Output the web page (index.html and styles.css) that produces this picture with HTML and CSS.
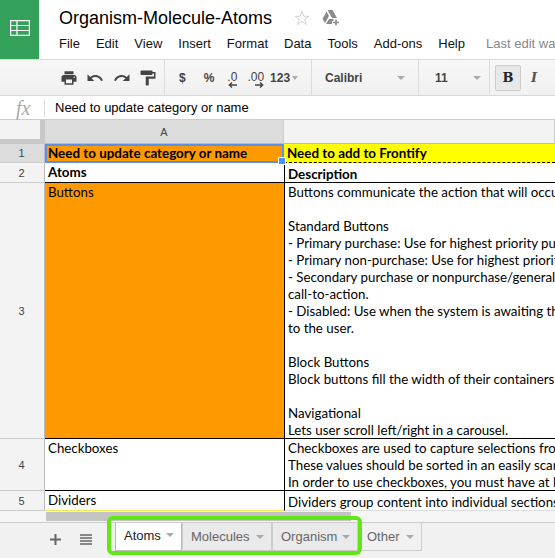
FILE: index.html
```html
<!DOCTYPE html>
<html lang="en">
<head>
    <meta charset="UTF-8">
    <meta name="viewport" content="width=device-width, initial-scale=1.0">
    <title>Organism-Molecule-Atoms</title>
    <link rel="stylesheet" href="styles.css">
</head>
<body>
    <header class="top">
        <div class="logo">
            <svg width="20" height="16" viewBox="0 0 20 16"><path d="M.6.6h18.800v14.800H.6zM.6 5.500h18.800M.6 10.500h18.800M7 .6v14.800" fill="none" stroke="#fff" stroke-width="1.200"/></svg>
        </div>
        <div class="doc">
            <div class="title-row">
                <span class="title">Organism-Molecule-Atoms</span>
                <svg class="star" width="16" height="16" viewBox="0 0 18 18"><path d="M9 1.500l2 5.600h5.800l-4.700 3.500 1.800 5.700L9 12.800l-4.900 3.500 1.800-5.700-4.700-3.500H7z" fill="none" stroke="#ccc" stroke-width="1"/></svg>
                <svg class="drive" width="18" height="16" viewBox="0 0 18 16"><path d="M5.500 0h5l4.500 8h-5zM4.600 1.500L7 6 3 13 .5 9zM4 14l3-5h4.500v2H10v3z" fill="#8a8a8a"/><path d="M14 9.500v6M11 12.500h6" stroke="#8a8a8a" stroke-width="1.600" fill="none"/></svg>
            </div>
            <nav class="menu">
                <span>File</span><span>Edit</span><span>View</span><span>Insert</span><span>Format</span><span>Data</span><span>Tools</span><span>Add-ons</span><span>Help</span>
                <span class="last-edit">Last edit was yesterday</span>
            </nav>
        </div>
    </header>

    <div class="toolbar">
        <div class="tool-group icons">
            <svg width="18" height="18" viewBox="0 0 24 24"><path d="M19 8H5c-1.660 0-3 1.340-3 3v6h4v4h12v-4h4v-6c0-1.660-1.340-3-3-3zm-3 11H8v-5h8v5zm3-7c-.55 0-1-.45-1-1s.45-1 1-1 1 .45 1 1-.45 1-1 1zm-1-9H6v4h12V3z"/></svg>
            <svg width="18" height="18" viewBox="0 0 24 24"><path d="M12.500 8c-2.650 0-5.050.99-6.900 2.600L2 7v9h9l-3.620-3.620c1.390-1.160 3.160-1.880 5.120-1.880 3.540 0 6.550 2.310 7.600 5.500l2.370-.78C21.080 11.030 17.150 8 12.500 8z"/></svg>
            <svg width="18" height="18" viewBox="0 0 24 24"><path d="M18.400 10.600C16.550 8.990 14.150 8 11.500 8c-4.650 0-8.580 3.030-9.960 7.220L3.900 16c1.050-3.190 4.050-5.500 7.600-5.500 1.950 0 3.730.72 5.120 1.880L13 16h9V7l-3.600 3.600z"/></svg>
            <svg width="18" height="18" viewBox="0 0 24 24"><path d="M18 4V3c0-.55-.45-1-1-1H3c-.55 0-1 .45-1 1v4c0 .55.45 1 1 1h14c.55 0 1-.45 1-1V6h2v4H9v11c0 .55.45 1 1 1h2c.55 0 1-.45 1-1v-8h9V4h-4z"/></svg>
        </div>
        <div class="tool-group formats">
            <span class="fmt dollar">$</span>
            <span class="fmt pct">%</span>
            <span class="fmt dec">.0<svg width="9" height="6" viewBox="0 0 9 6"><path d="M9 3H2M4 .5L1.300 3 4 5.500" fill="none" stroke="#444" stroke-width="1.400"/></svg></span>
            <span class="fmt dec">.00<svg width="9" height="6" viewBox="0 0 9 6"><path d="M0 3h7M5 .5L7.700 3 5 5.500" fill="none" stroke="#444" stroke-width="1.400"/></svg></span>
            <span class="fmt num">123<i class="caret"></i></span>
        </div>
        <div class="tool-group font-name"><span>Calibri</span><i class="caret"></i></div>
        <div class="tool-group font-size"><span>11</span><i class="caret"></i></div>
        <div class="tool-group styles">
            <span class="style-btn on">B</span>
            <span class="style-btn italic">I</span>
        </div>
    </div>

    <div class="formula">
        <span class="fx">fx</span>
        <span class="formula-text">Need to update category or name</span>
    </div>

    <div class="sheet">
        <div class="corner"></div>
        <div class="col-head selected">A</div>
        <div class="col-head"></div>

        <div class="row-head selected">1</div>
        <div class="cell bold orange active">Need to update category or name<i class="handle"></i></div>
        <div class="cell bold yellow">Need to add to Frontify</div>

        <div class="row-head">2</div>
        <div class="cell bold">Atoms</div>
        <div class="cell bold col-b low">Description</div>

        <div class="row-head">3</div>
        <div class="cell orange">Buttons</div>
        <div class="cell col-b">Buttons communicate the action that will occur when clicked
<br>
<br>Standard Buttons
<br>- Primary purchase: Use for highest priority purchase actions
<br>- Primary non-purchase: Use for highest priority actions
<br>- Secondary purchase or nonpurchase/general actions with a lesser
<br>call-to-action.
<br>- Disabled: Use when the system is awaiting the next action
<br>to the user.
<br>
<br>Block Buttons
<br>Block buttons fill the width of their containers and are
<br>
<br>Navigational
<br>Lets user scroll left/right in a carousel.</div>

        <div class="row-head">4</div>
        <div class="cell">Checkboxes</div>
        <div class="cell col-b">Checkboxes are used to capture selections from a list
<br>These values should be sorted in an easily scannable order
<br>In order to use checkboxes, you must have at least two</div>

        <div class="row-head">5</div>
        <div class="cell last">Dividers</div>
        <div class="cell col-b low last-b">Dividers group content into individual sections of a page</div>
    </div>

    <div class="hscroll"><div class="thumb"></div></div>

    <footer class="tabbar">
        <div class="tab-tools">
            <svg width="11" height="11" viewBox="0 0 11 11"><path d="M5.500 0v11M0 5.500h11" stroke="#666" stroke-width="2"/></svg>
            <svg width="12" height="11" viewBox="0 0 12 11"><path d="M0 1h12M0 4h12M0 7h12M0 10h12" stroke="#666" stroke-width="1.600"/></svg>
        </div>
        <div class="tab active">Atoms<i class="caret"></i></div>
        <div class="tab">Molecules<i class="caret"></i></div>
        <div class="tab organism">Organism<i class="caret"></i></div>
        <div class="tab other">Other<i class="caret"></i></div>
        <div class="highlight"></div>
    </footer>
</body>
</html>
```

FILE: styles.css
```css
html, body {
    margin: 0;
    padding: 0;
}
body {
    width: 555px;
    height: 558px;
    overflow: hidden;
    display: flex;
    flex-direction: column;
    font-family: 'Liberation Sans', Arial, sans-serif;
    color: #000;
    background: #fff;
}
.top {
    display: flex;
    height: 59px;
    flex: none;
}
.logo {
    width: 39px;
    box-sizing: border-box;
    padding-bottom: 4px;
    background-color: #34a15a;
    display: flex;
    align-items: center;
    justify-content: center;
}
.doc {
    padding-left: 20px;
    min-width: 0;
    flex: 1;
    overflow: hidden;
}
.title-row {
    display: flex;
    align-items: center;
    height: 36px;
    white-space: nowrap;
}
.title {
    font-size: 18px;
}
.star {
    margin-left: 22px;
}
.drive {
    margin-left: 12px;
}
.menu {
    display: flex;
    gap: 16px;
    font-size: 13px;
    white-space: nowrap;
    color: #111;
}
.last-edit {
    color: #888;
    margin-left: 5px;
}

.toolbar {
    display: flex;
    flex: none;
    height: 35px;
    background: linear-gradient(#f7f7f7, #f1f1f1);
    border-top: 1px solid #d9d9d9;
    border-bottom: 1px solid #d9d9d9;
    overflow: hidden;
}
.tool-group {
    display: flex;
    align-items: center;
    border-right: 1px solid #dcdcdc;
    flex: none;
    font-size: 12px;
    font-weight: bold;
    color: #444;
}
.icons {
    width: 165px;
    padding-left: 60px;
    box-sizing: border-box;
    gap: 8.400px;
}
.icons svg {
    fill: #444;
}
.formats {
    width: 147px;
    box-sizing: border-box;
}
.fmt {
    display: flex;
    flex-direction: column;
    align-items: flex-end;
    line-height: 10px;
}
.dollar {
    margin-left: 14px;
}
.pct {
    margin-left: 18px;
}
.dec {
    margin-left: 13px;
    margin-top: 5px;
    font-weight: normal;
}
.dec + .dec {
    margin-left: 10px;
}
.num {
    flex-direction: row;
    align-items: center;
    margin-left: 6px;
}
.font-name {
    width: 107px;
    box-sizing: border-box;
    padding-left: 13px;
    justify-content: space-between;
    padding-right: 13px;
}
.font-size {
    width: 71px;
    box-sizing: border-box;
    padding-left: 16px;
    padding-right: 8px;
    justify-content: space-between;
}
.styles {
    border-right: none;
    padding-left: 5px;
}
.style-btn {
    width: 26px;
    height: 26px;
    display: flex;
    align-items: center;
    justify-content: center;
    box-sizing: border-box;
    font-family: 'DejaVu Serif', serif;
    font-size: 13px;
    font-weight: bold;
    color: #222;
}
.style-btn.on {
    background: #e8e8e8;
    border: 1px solid #ccc;
    border-radius: 2px;
}
.style-btn.italic {
    font-style: italic;
    color: #555;
}
.caret {
    display: inline-block;
    width: 0;
    height: 0;
    border-left: 4px solid transparent;
    border-right: 4px solid transparent;
    border-top: 4px solid #aaa;
}
.num .caret {
    margin-left: 2px;
    border-left-width: 3.500px;
    border-right-width: 3.500px;
}

.formula {
    display: flex;
    align-items: center;
    flex: none;
    height: 23px;
    border-bottom: 1px solid #ccc;
    font-size: 13px;
}
.fx {
    width: 45px;
    box-sizing: border-box;
    padding-left: 16px;
    font-family: 'Liberation Serif', serif;
    font-style: italic;
    font-size: 20px;
    color: #aaa;
    border-right: 1px solid #ddd;
    line-height: 18px;
}
.formula-text {
    margin-left: 10px;
    padding-bottom: 1px;
}

.sheet {
    display: grid;
    grid-template-columns: 45px 239px 271px;
    grid-template-rows: 24px 19px 20px 256px 52px 20px;
    flex: none;
    font-family: Lato, sans-serif;
    font-size: 13.300px;
    overflow: hidden;
}
.corner {
    background: #f3f3f3;
    border-right: 5px solid #c8c8c8;
    border-bottom: 5px solid #c8c8c8;
    box-sizing: border-box;
}
.col-head {
    background: #f3f3f3;
    border-right: 1px solid #ccc;
    border-bottom: 1px solid #bbb;
    display: flex;
    align-items: center;
    justify-content: center;
    font-family: 'Liberation Sans', sans-serif;
    font-size: 11px;
    color: #444;
}
.col-head.selected {
    background: #dcdcdc;
}
.row-head {
    background: #f3f3f3;
    border-right: 1px solid #bbb;
    border-bottom: 1px solid #ccc;
    display: flex;
    align-items: center;
    justify-content: center;
    padding-right: 1px;
    font-family: 'Liberation Sans', sans-serif;
    font-size: 11px;
    color: #444;
}
.row-head.selected {
    background: #dcdcdc;
}
.cell {
    padding: 1px 0 0 3px;
    line-height: 17px;
    white-space: nowrap;
    overflow: hidden;
    border-bottom: 1px solid #000;
    box-sizing: border-box;
}
.bold {
    font-weight: bold;
    font-size: 13.400px;
}
.orange {
    background-color: #ff9900;
}
.yellow {
    background-color: #ffff00;
    border-bottom: 1px dashed #000;
}
.col-b {
    border-left: 1px solid #000;
}
.low {
    padding-top: 3px;
}
.last {
    border-bottom: 1px solid #f2e84b;
}
.last-b {
    border-bottom: 1px solid #ddd;
}
.active {
    border: 2px solid #5b8fe8;
    padding: 0 0 0 1px;
    line-height: 15px;
    overflow: visible;
    position: relative;
}
.handle {
    position: absolute;
    right: -4px;
    bottom: -4px;
    width: 6px;
    height: 6px;
    background: #4d90fe;
    border: 1px solid #fff;
}

.hscroll {
    flex: none;
    height: 11px;
    box-sizing: content-box;
    background: #f5f5f5;
    padding-left: 46px;
    border-bottom: 1px solid #ccc;
}
.thumb {
    width: 305px;
    height: 9px;
    margin-top: 1px;
    background: #c4c4c4;
}

.tabbar {
    display: flex;
    flex: 1;
    background: #f1f1f1;
    font-size: 13px;
    color: #666;
    position: relative;
}
.tab-tools {
    width: 115px;
    box-sizing: border-box;
    padding-left: 50px;
    display: flex;
    gap: 19px;
    align-items: center;
    padding-bottom: 2px;
}
.tab {
    display: flex;
    align-items: center;
    justify-content: space-between;
    width: 90px;
    height: 28px;
    box-sizing: border-box;
    padding: 0 7px 0 8px;
    border: 1px solid #ccc;
    border-top: none;
    background: #eaeaea;
}
.tab.active {
    width: 67px;
    background: #fff;
    color: #222;
    border-color: #bbb;
    padding-bottom: 3px;
}
.tab.organism {
    width: 86px;
}
.tab.other {
    width: 64px;
    background: #f1f1f1;
}
.highlight {
    position: absolute;
    left: 107px;
    top: -7px;
    width: 255px;
    height: 39px;
    box-sizing: border-box;
    border: 4px solid #62e616;
    border-radius: 6px;
}
```
